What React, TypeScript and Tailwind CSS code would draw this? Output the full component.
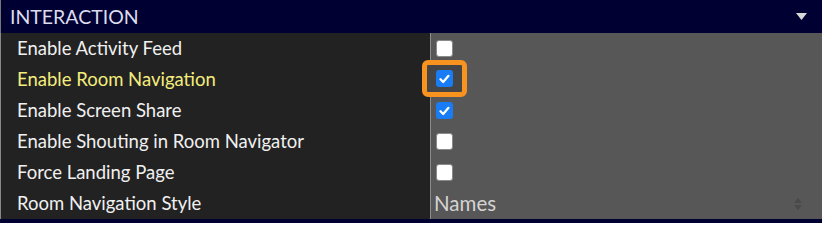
import React from 'react';

const rows: { label: string; checked?: boolean; highlight?: boolean; focus?: boolean }[] = [
  { label: 'Enable Activity Feed' },
  { label: 'Enable Room Navigation', checked: true, highlight: true, focus: true },
  { label: 'Enable Screen Share', checked: true },
  { label: 'Enable Shouting in Room Navigator' },
  { label: 'Force Landing Page' },
];

const Box = ({ checked }: { checked?: boolean }) =>
  checked ? (
    <span className="block w-[17px] h-[17px] rounded-[3px] bg-[#1a7cf5] flex items-center justify-center">
      <svg width="11" height="10" viewBox="0 0 11 10">
        <path d="M1.5 5.2 L4.2 8 L9.5 1.8" fill="none" stroke="white" strokeWidth="2.2" strokeLinecap="round" strokeLinejoin="round" />
      </svg>
    </span>
  ) : (
    <span className="block w-[17px] h-[17px] rounded-[3px] bg-white border border-[#8a8a8a]" />
  );

const App: React.FC = () => {
  return (
    <div className="w-[822px] h-[223px] bg-[#000033] font-['Lato',sans-serif] overflow-hidden">
      {/* Header */}
      <div className="h-[33px] flex items-center justify-between pl-[9px] pr-[15px] border-l border-[#777]">
        <span className="text-[19.5px] text-[#dcdcec] leading-none">INTERACTION</span>
        <svg width="11" height="7" viewBox="0 0 11 7">
          <path d="M0 0 H11 L5.5 7 Z" fill="#d8d8d8" />
        </svg>
      </div>

      {/* Settings table */}
      <div className="border-l border-[#888]">
        {rows.map((r, i) => (
          <div key={i} className="h-[31px] flex">
            <div className={`w-[429px] bg-[#222] flex items-center pl-4 text-[18.5px] leading-none ${r.highlight ? 'text-[#f4ec7c]' : 'text-[#f0f0f0]'}`}>
              {r.label}
            </div>
            <div className="flex-1 bg-[#575757] border-l border-[#8c8c8c] flex items-center relative">
              {r.focus ? (
                <span className="absolute z-10 left-[-9px] top-[-4px] w-[45px] h-[37px] rounded-[6px] border-[5px] border-[#f7931e] bg-[#454545] flex items-center justify-center">
                  <Box checked />
                </span>
              ) : (
                <span className="ml-[5px]">
                  <Box checked={r.checked} />
                </span>
              )}
            </div>
          </div>
        ))}
        <div className="h-[31px] flex">
          <div className="w-[429px] bg-[#222] flex items-center pl-4 text-[18.5px] leading-none text-[#f0f0f0]">Room Navigation Style</div>
          <div className="flex-1 bg-[#575757] border-l border-[#8c8c8c] flex items-center justify-between pl-[3px] pr-[20px]">
            <span className="text-[20.5px] leading-none text-[#d4d4d4]">Names</span>
            <svg width="8" height="12" viewBox="0 0 8 12">
              <path d="M4 0 L8 5 H0 Z" fill="#4a4a4a" />
              <path d="M4 12 L8 7 H0 Z" fill="#4a4a4a" />
            </svg>
          </div>
        </div>
      </div>
    </div>
  );
};

export default App;
